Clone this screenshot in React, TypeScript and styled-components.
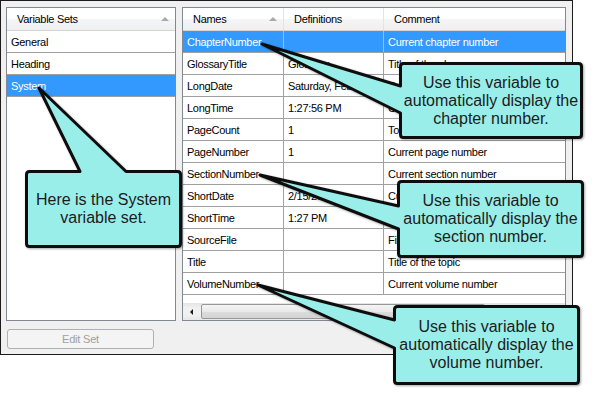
import * as React from "react";
import styled, { createGlobalStyle } from "styled-components";

const Global = createGlobalStyle`
  html, body {
    margin: 0;
    padding: 0;
    background: #fff;
  }
  body {
    font-family: "Liberation Sans", Arial, sans-serif;
  }
  * {
    box-sizing: border-box;
  }
`;

const Stage = styled.div`
  position: relative;
  width: 593px;
  height: 393px;
  overflow: hidden;
  background: #fff;
`;

const Dialog = styled.div`
  width: 573px;
  height: 355px;
  border: 1px solid #1b1b1b;
  background: #f0f0f0;
  padding: 6px 6px 0 5px;
  display: flex;
  flex-direction: column;
`;

const Panes = styled.div`
  display: flex;
  gap: 6px;
  height: 314px;
`;

const Pane = styled.div<{ $width?: number }>`
  width: ${p => (p.$width ? `${p.$width}px` : "auto")};
  flex: ${p => (p.$width ? "none" : "1")};
  min-width: 0;
  border: 1px solid #828790;
  background: #fff;
  display: flex;
  flex-direction: column;
  overflow: hidden;
  font-size: 11px;
  letter-spacing: -0.3px;
  color: #000;
`;

const HeadRow = styled.div`
  display: flex;
  flex: none;
  height: 23px;
  border-bottom: 1px solid #d5d5d5;
  background: linear-gradient(#ffffff 0%, #ffffff 48%, #f4f5f7 52%, #eef0f2 100%);
`;

const HeadCell = styled.div<{ $width?: number; $last?: boolean }>`
  width: ${p => (p.$width ? `${p.$width}px` : "auto")};
  flex: ${p => (p.$width ? "none" : "1")};
  display: flex;
  align-items: center;
  padding: 0 6px 0 10px;
  border-right: ${p => (p.$last ? "none" : "1px solid #e2e4e7")};
  white-space: nowrap;
`;

const SortArrow = styled.span`
  margin-left: auto;
  width: 0;
  height: 0;
  border-left: 4px solid transparent;
  border-right: 4px solid transparent;
  border-bottom: 4px solid #a9a9a9;
`;

const Body = styled.div`
  flex: 1;
  display: flex;
  flex-direction: column;
`;

const Row = styled.div<{ $selected?: boolean }>`
  display: flex;
  flex: none;
  width: 461px;
  height: 22px;
  border-bottom: 1px solid #a0a0a0;
  background: ${p => (p.$selected ? "#3399ff" : "#fff")};
  color: ${p => (p.$selected ? "#fff" : "#000")};
`;

const Cell = styled.div<{ $width?: number; $selected?: boolean }>`
  width: ${p => (p.$width ? `${p.$width}px` : "auto")};
  flex: ${p => (p.$width ? "none" : "1")};
  display: flex;
  align-items: center;
  padding: 0 3px 0 4px;
  white-space: nowrap;
  overflow: hidden;
  border-right: 1px solid ${p => (p.$selected ? "#8fc3f5" : "#a0a0a0")};
`;

const ListItem = styled.div<{ $selected?: boolean }>`
  height: 22px;
  flex: none;
  display: flex;
  align-items: center;
  padding-left: 4px;
  border-bottom: 1px solid #a0a0a0;
  background: ${p => (p.$selected ? "#3399ff" : "#fff")};
  color: ${p => (p.$selected ? "#fff" : "#000")};
`;

const Filler = styled.div`
  flex: 1;
`;

const HScroll = styled.div`
  height: 17px;
  flex: none;
  display: flex;
  align-items: center;
  background: linear-gradient(#e4e4e4, #f1f1f1 30%, #f1f1f1 70%, #e8e8e8);
`;

const ArrowButton = styled.div<{ $dir: "left" | "right" }>`
  width: 17px;
  height: 17px;
  flex: none;
  display: flex;
  align-items: center;
  justify-content: center;
  margin-left: ${p => (p.$dir === "right" ? "auto" : "0")};
  &::before {
    content: "";
    width: 0;
    height: 0;
    border-top: 3px solid transparent;
    border-bottom: 3px solid transparent;
    ${p =>
      p.$dir === "left"
        ? "border-right: 3px solid #1a1a1a;"
        : "border-left: 3px solid #1a1a1a;"}
  }
`;

const Thumb = styled.div`
  margin-left: 1px;
  width: 284px;
  height: 15px;
  border: 1px solid #979797;
  border-radius: 2px;
  background: linear-gradient(#f5f5f5, #e9e9e9 50%, #dcdcdc 52%, #d3d3d3);
  display: flex;
  align-items: center;
  justify-content: center;
  gap: 2px;
`;

const Grip = styled.span`
  width: 1px;
  height: 6px;
  background: #5e5e5e;
  box-shadow: 1px 0 0 #fff;
`;

const EditButton = styled.button`
  margin: 8px 0 0 1px;
  width: 147px;
  height: 20px;
  border: 1px solid #adb2b5;
  border-radius: 3px;
  background: #f4f4f4;
  color: #a0a0a0;
  font-family: "Liberation Sans", Arial, sans-serif;
  font-size: 11px;
  letter-spacing: -0.2px;
  padding: 0;
`;

const Overlay = styled.svg`
  position: absolute;
  left: 0;
  top: 0;
  z-index: 1;
`;

const CalloutText = styled.div<{ $left: number; $top: number; $w: number; $h: number }>`
  position: absolute;
  z-index: 2;
  left: ${p => p.$left}px;
  top: ${p => p.$top}px;
  width: ${p => p.$w}px;
  height: ${p => p.$h}px;
  display: flex;
  align-items: center;
  justify-content: center;
  text-align: center;
  font-size: 16px;
  line-height: 18px;
  color: #1c1c1c;
  white-space: nowrap;
`;

const variables = [
  ["ChapterNumber", "", "Current chapter number"],
  ["GlossaryTitle", "Glossary", "Title of the glossary"],
  ["LongDate", "Saturday, February 15, 2014", "Current date (long)"],
  ["LongTime", "1:27:56 PM", "Current time (long)"],
  ["PageCount", "1", "Total page count"],
  ["PageNumber", "1", "Current page number"],
  ["SectionNumber", "", "Current section number"],
  ["ShortDate", "2/15/2014", "Current date (short)"],
  ["ShortTime", "1:27 PM", "Current time (short)"],
  ["SourceFile", "", "File name of the source"],
  ["Title", "", "Title of the topic"],
  ["VolumeNumber", "", "Current volume number"],
];

const sets = ["General", "Heading", "System"];

// callout outline: rounded box plus a wedge on its left or top side
type Callout = {
  box: [number, number, number, number];
  side: "left" | "top";
  a: number;
  b: number;
  tip: [number, number];
  lines: string[];
};

const callouts: Callout[] = [
  {
    box: [399, 62, 583, 139],
    side: "left",
    a: 86,
    b: 113,
    tip: [262, 44],
    lines: ["Use this variable to", "automatically display the", "chapter number."],
  },
  {
    box: [397, 180, 584, 258],
    side: "left",
    a: 206,
    b: 229,
    tip: [260, 175],
    lines: ["Use this variable to", "automatically display the", "section number."],
  },
  {
    box: [393, 305, 580, 385],
    side: "left",
    a: 320,
    b: 348,
    tip: [258, 285],
    lines: ["Use this variable to", "automatically display the", "volume number."],
  },
  {
    box: [25, 170, 182, 248],
    side: "top",
    a: 80,
    b: 126,
    tip: [39, 88],
    lines: ["Here is the System", "variable set."],
  },
];

const outline = ({ box, side, a, b, tip }: Callout) => {
  const x1 = box[0] + 1.5;
  const y1 = box[1] + 1.5;
  const x2 = box[2] - 1.5;
  const y2 = box[3] - 1.5;
  const r = 3;
  const [tx, ty] = tip;
  const topEdge =
    side === "top"
      ? `M ${x1 + r} ${y1} H ${a} L ${tx} ${ty} L ${b} ${y1} H ${x2 - r}`
      : `M ${x1 + r} ${y1} H ${x2 - r}`;
  const rest = `Q ${x2} ${y1} ${x2} ${y1 + r} V ${y2 - r} Q ${x2} ${y2} ${x2 - r} ${y2} H ${x1 + r} Q ${x1} ${y2} ${x1} ${y2 - r}`;
  const leftEdge =
    side === "left"
      ? `V ${b} L ${tx} ${ty} L ${x1} ${a} V ${y1 + r}`
      : `V ${y1 + r}`;
  return `${topEdge} ${rest} ${leftEdge} Q ${x1} ${y1} ${x1 + r} ${y1} Z`;
};

const App = () => (
  <Stage>
    <Global />
    <Dialog>
      <Panes>
        <Pane $width={170}>
          <HeadRow>
            <HeadCell $last>
              Variable Sets
              <SortArrow />
            </HeadCell>
          </HeadRow>
          <Body>
            {sets.map(name => (
              <ListItem key={name} $selected={name === "System"}>
                {name}
              </ListItem>
            ))}
          </Body>
        </Pane>
        <Pane>
          <HeadRow>
            <HeadCell $width={101}>
              Names
              <SortArrow />
            </HeadCell>
            <HeadCell $width={100}>Definitions</HeadCell>
            <HeadCell $width={260}>Comment</HeadCell>
          </HeadRow>
          <Body>
            {variables.map(([name, def, comment], i) => (
              <Row key={name} $selected={i === 0}>
                <Cell $width={101} $selected={i === 0}>{name}</Cell>
                <Cell $width={100} $selected={i === 0}>{def}</Cell>
                <Cell $width={260} $selected={i === 0}>{comment}</Cell>
              </Row>
            ))}
            <Filler />
            <HScroll>
              <ArrowButton $dir="left" />
              <Thumb>
                <Grip />
                <Grip />
                <Grip />
              </Thumb>
              <ArrowButton $dir="right" />
            </HScroll>
          </Body>
        </Pane>
      </Panes>
      <EditButton disabled>Edit Set</EditButton>
    </Dialog>

    <Overlay width={593} height={393} viewBox="0 0 593 393">
      <defs>
        <filter id="shade" x="-10%" y="-10%" width="130%" height="130%">
          <feDropShadow dx="1" dy="1" stdDeviation="0.8" floodColor="#000" floodOpacity="0.35" />
        </filter>
      </defs>
      {callouts.map((c, i) => (
        <path
          key={i}
          d={outline(c)}
          fill="#9aeeea"
          stroke="#111"
          strokeWidth={3}
          strokeLinejoin="round"
          filter="url(#shade)"
        />
      ))}
    </Overlay>
    {callouts.map((c, i) => (
      <CalloutText
        key={i}
        $left={c.box[0]}
        $top={c.box[1]}
        $w={c.box[2] - c.box[0]}
        $h={c.box[3] - c.box[1]}
      >
        <div>
          {c.lines.map(line => (
            <div key={line}>{line}</div>
          ))}
        </div>
      </CalloutText>
    ))}
  </Stage>
);

export default App;
